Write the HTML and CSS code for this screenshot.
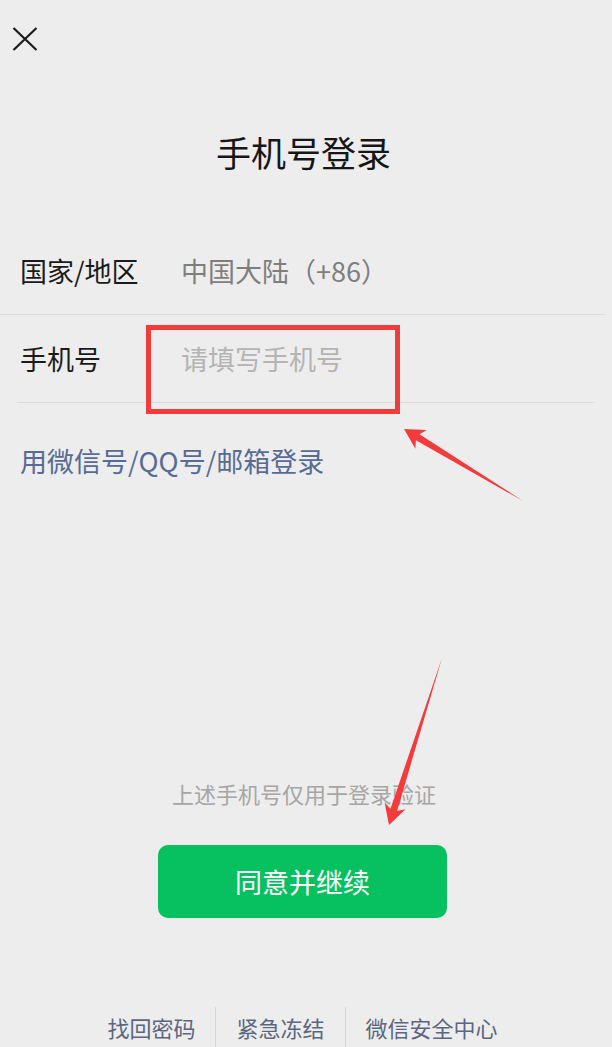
FILE: index.html
```html
<!DOCTYPE html>
<html lang="zh-CN">
<head>
    <meta charset="UTF-8">
    <meta name="viewport" content="width=device-width, initial-scale=1.0">
    <title>手机号登录</title>
    <link rel="stylesheet" href="styles.css">
</head>
<body>
    <div class="page">
        <div class="top">
            <svg class="close" width="26" height="24" viewBox="0 0 26 24">
                <path d="M1.5 1 L24.5 23 M24.5 1 L1.5 23" stroke="#1b1b1b" stroke-width="2.2" fill="none"/>
            </svg>
        </div>

        <h1 class="title">手机号登录</h1>

        <div class="form">
            <div class="row row-first">
                <span class="label">国家/地区</span>
                <span class="value">中国大陆（+86）</span>
            </div>
            <div class="row row-second">
                <span class="label">手机号</span>
                <span class="placeholder">请填写手机号</span>
            </div>
        </div>

        <div class="alt-link">用微信号/QQ号/邮箱登录</div>

        <div class="spacer"></div>

        <div class="note">上述手机号仅用于登录验证</div>
        <button class="agree-btn">同意并继续</button>

        <div class="footer">
            <span class="footer-item">找回密码</span>
            <span class="footer-item">紧急冻结</span>
            <span class="footer-item">微信安全中心</span>
        </div>

        <!-- red annotation marks drawn over the screen -->
        <svg class="marks" width="612" height="1047" viewBox="0 0 612 1047">
            <rect x="148.5" y="327.5" width="249" height="84" fill="none" stroke="#f33b3c" stroke-width="5"/>
            <polygon fill="#f33b3c" points="404,429 426.8,430 419.5,434.3 523,501 415.9,440.3 415.4,448.8"/>
            <polygon fill="#f33b3c" points="389,825 405.5,809.3 397.1,810.9 442,658 390.5,808.7 384.6,802.6"/>
        </svg>
    </div>
</body>
</html>
```

FILE: styles.css
```css
body {
    margin: 0;
    background-color: #ededed;
    font-family: "Noto Sans CJK SC", "Noto Sans", sans-serif;
    color: #1b1b1b;
}

.page {
    position: relative;
    height: 1047px;
    display: flex;
    flex-direction: column;
    overflow: hidden;
}

.top {
    padding: 27px 0 0 12px;
    height: 24px;
}

.close {
    display: block;
}

.title {
    margin: 81px 0 0;
    padding-right: 5px;
    font-size: 35px;
    font-weight: normal;
    line-height: 40px;
    text-align: center;
    color: #161616;
}

.form {
    margin-top: 54px;
}

.row {
    display: flex;
    align-items: center;
    border-bottom: 1px solid #dcdcdc;
    font-size: 27px;
}

.row-first {
    height: 88px;
    padding-left: 20px;
    margin-right: 7px;
}

.row-second {
    height: 87px;
    padding-left: 3px;
    margin: 0 17px;
}

.label {
    width: 161px;
    color: #1b1b1b;
}

.value {
    color: #7e7e7e;
}

.placeholder {
    color: #b4b4b4;
}

.alt-link {
    margin-top: 40px;
    padding-left: 20px;
    font-size: 27px;
    line-height: 36px;
    color: #576b95;
}

.spacer {
    flex: 1;
}

.note {
    padding-right: 4px;
    font-size: 22px;
    line-height: 30px;
    text-align: center;
    color: #a6a6a6;
}

.agree-btn {
    align-self: flex-start;
    margin: 37px 0 0 158px;
    width: 289px;
    height: 73px;
    border: none;
    border-radius: 10px;
    background-color: #07c160;
    color: white;
    font-family: inherit;
    font-size: 27px;
    cursor: pointer;
}

.footer {
    margin-top: 89px;
    height: 40px;
    padding-right: 7px;
    display: flex;
    justify-content: center;
}

.footer-item {
    padding: 0 20px;
    font-size: 22px;
    line-height: 40px;
    color: #5b6680;
}

.footer-item + .footer-item {
    border-left: 1px solid #d6d6d6;
}

.marks {
    position: absolute;
    top: 0;
    left: 0;
    pointer-events: none;
}
```
